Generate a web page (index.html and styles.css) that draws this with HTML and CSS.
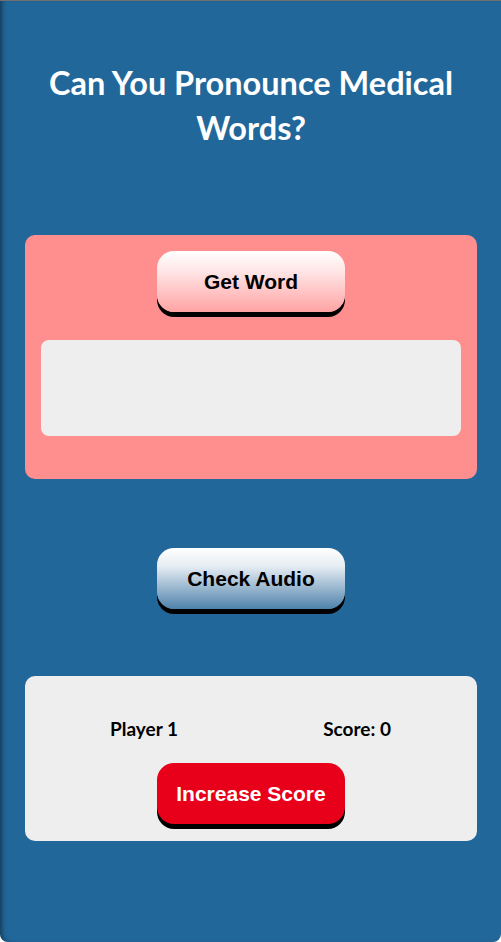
FILE: index.html
```html
<!DOCTYPE html>
<html lang="en">
<head>
<meta charset="utf-8">
<title>Can You Pronounce Medical Words?</title>
<link rel="stylesheet" href="styles.css">
</head>
<body>
<main class="app">
  <h1 class="title">Can You Pronounce Medical Words?</h1>
  <section class="word-card">
    <button class="btn btn-pink">Get Word</button>
    <div class="word-box"></div>
  </section>
  <div class="audio-row">
    <button class="btn btn-blue">Check Audio</button>
  </div>
  <section class="score-card">
    <div class="score-row">
      <span class="player">Player 1</span>
      <span class="score">Score: 0</span>
    </div>
    <button class="btn btn-red">Increase Score</button>
  </section>
</main>
</body>
</html>
```
FILE: styles.css
```css
* { box-sizing: border-box; }
html, body { margin: 0; padding: 0; }
body {
  background: #ffffff;
  width: 501px;
  height: 942px;
  overflow: hidden;
}
.app {
  width: 501px;
  height: 942px;
  background: #22679a;
  border-top: 1px solid #707070;
  border-radius: 0 0 8px 8px;
  box-shadow: inset 5px 0 5px -3px rgba(0, 0, 0, 0.45);
  padding: 0 24px 0 25px;
  display: flex;
  flex-direction: column;
  align-items: stretch;
}
.title {
  margin: 59px 0 0;
  color: #ffffff;
  font-family: Lato, "Noto Sans", sans-serif;
  font-weight: 700;
  font-size: 32.5px;
  line-height: 45px;
  text-align: center;
  padding: 0 10px;
}
.word-card {
  margin-top: 85px;
  background: #ff8f8f;
  border-radius: 10px;
  padding: 16px 16px 43px;
  display: flex;
  flex-direction: column;
  align-items: center;
}
.btn {
  width: 188px;
  height: 61px;
  border: none;
  border-radius: 17px;
  box-shadow: 0 5px 0 #000000;
  font-family: "Liberation Sans", Arial, sans-serif;
  font-weight: 700;
  font-size: 21px;
  color: #000000;
  padding: 0;
  cursor: pointer;
}
.btn-pink {
  background: linear-gradient(to bottom, #ffffff 0%, #ffe4e4 35%, #ffa3a3 100%);
}
.btn-blue {
  background: linear-gradient(to bottom, #ffffff 0%, #e6edf3 30%, #4f82ab 100%);
}
.btn-red {
  background: #e8001b;
  color: #ffffff;
}
.word-box {
  margin-top: 28px;
  align-self: stretch;
  height: 96px;
  background: #eeeeee;
  border-radius: 8px;
}
.audio-row {
  margin-top: 69px;
  display: flex;
  justify-content: center;
}
.score-card {
  margin-top: 67px;
  background: #eeeeee;
  border-radius: 10px;
  padding: 41px 0 17px;
  display: flex;
  flex-direction: column;
  align-items: center;
}
.score-row {
  align-self: stretch;
  display: flex;
  justify-content: space-between;
  padding: 0 86px 0 85px;
  font-family: Lato, "Noto Sans", sans-serif;
  font-weight: 700;
  font-size: 19px;
  line-height: 24px;
  color: #000000;
  margin-bottom: 22px;
}
```
